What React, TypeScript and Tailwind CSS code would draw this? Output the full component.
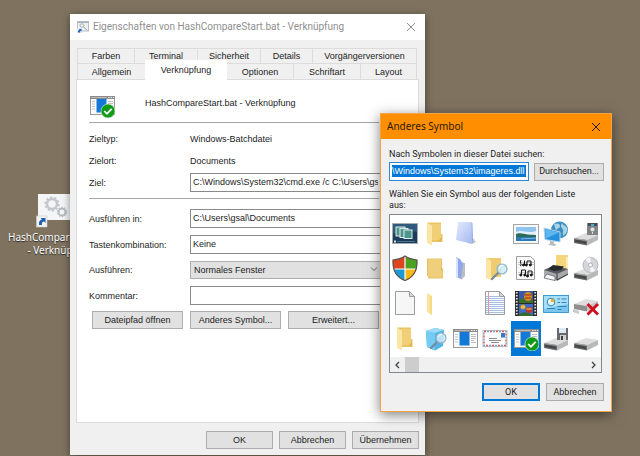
import React, { useState } from 'react';

type IconProps = { className?: string };

const Svg: React.FC<{ children?: React.ReactNode; className?: string }> = ({ children, className = 'w-[26px] h-[26px]' }) => (
  <svg viewBox="0 0 26 26" className={className} aria-hidden="true">
    {children}
  </svg>
);

const CloseIcon: React.FC<IconProps> = ({ className }) => (
  <svg viewBox="0 0 10 10" className={className} fill="none" stroke="currentColor" strokeWidth="1" aria-hidden="true">
    <path d="M1 1l8 8M9 1l-8 8" />
  </svg>
);

const Gear: React.FC<{ x: number; y: number; r: number; color: string }> = ({ x, y, r, color }) => (
  <g transform={`translate(${x} ${y})`} fill="none" stroke={color}>
    <circle r={r} strokeWidth={r * 0.5} />
    <circle r={r * 1.35} strokeWidth={r * 0.35} strokeDasharray={`${r * 0.45} ${r * 0.398}`} />
  </g>
);

const ShortcutFile: React.FC = () => (
  <svg viewBox="0 0 45 34" className="w-[45px] h-[34px]" aria-hidden="true">
    <rect x="2" y="0" width="43" height="26" fill="#f4f5f6" />
    <Gear x={16} y={10} r={5} color="#c3c7cb" />
    <Gear x={26} y={18} r={3.4} color="#b4b9be" />
    <rect x="0.500" y="22" width="10.500" height="11" fill="#f3f3f3" stroke="#c9c9c9" strokeWidth="0.600" />
    <path d="M3 31c-.3-3.500 1-5.200 3-5.400L4.600 24H9.500v5L8 27.500c-1.700.2-2.300 1.300-2 3.500z" fill="#1f5fb4" />
  </svg>
);

const BatchMini: React.FC = () => (
  <svg viewBox="0 0 12 12" className="w-3 h-3" aria-hidden="true">
    <rect x="0.500" y="0.500" width="11" height="9.500" fill="#eef1f2" stroke="#b7bfc4" />
    <path d="M1 1.500h10" stroke="#9cb2bd" />
    <Gear x={5} y={4.5} r={1.7} color="#aab2b8" />
    <path d="M6.500 6l4 3.500" stroke="#9aa4ab" />
    <rect x="0" y="7" width="5" height="5" fill="#dce7f2" />
    <path d="M1 11.500c0-2 .8-2.700 1.500-2.800L2 8h2.500v2.500l-.8-.7c-.6.3-.8.900-.7 1.700z" fill="#1f5fb4" />
  </svg>
);

const WindowShape = () => (
  <g>
    <rect x="1.500" y="4.500" width="24" height="18" fill="#fbfbfb" stroke="#9a9a9a" />
    <rect x="1" y="4" width="25" height="3" fill="#8b8b8b" />
    <path d="M2.500 5.500h15" stroke="#b9b9b9" />
    <path d="M19 5.500h1.500M21.500 5.500h1.500M24 5.500h1" stroke="#eeeeee" />
    <path d="M3 9.500h3M3 12h3M3 14.500h3M3 17h3" stroke="#c4c4c4" />
    <rect x="7.500" y="7" width="10" height="13.500" fill="#1478d6" />
    <path d="M19 9.500h5M19 11.500h5M19 13.500h5M19 15.500h3M19 17.500h5" stroke="#b4b4b4" strokeWidth="0.900" />
  </g>
);

const ProgramIcon = () => (
  <Svg><WindowShape /></Svg>
);

const ProgramOkIcon: React.FC<IconProps> = ({ className }) => (
  <Svg className={className}>
    <WindowShape />
    <circle cx="19" cy="19" r="7" fill="#109a18" stroke="#e9f5ea" strokeWidth="0.600" />
    <path d="M15.200 19l2.700 2.800 4.800-5" fill="none" stroke="#ffffff" strokeWidth="1.800" />
  </Svg>
);

const ScreensIcon = () => (
  <Svg>
    <rect x="0.500" y="3.500" width="25" height="20" fill="#1c3c5c" stroke="#a8adb0" />
    <path d="M1 4h24v8C17 9 9 17 1 13z" fill="#31597b" />
    <rect x="4" y="7" width="9" height="9" fill="#4e968d" stroke="#dfeeea" />
    <rect x="8" y="8.500" width="8" height="9" fill="#4e968d" stroke="#dfeeea" />
    <rect x="12" y="10" width="8" height="8.500" fill="#4e968d" stroke="#dfeeea" />
    <rect x="2" y="20.500" width="2" height="2" fill="#dce4e9" />
    <path d="M5 21.500h18" stroke="#557186" />
  </Svg>
);

const FolderOpenIcon = () => (
  <Svg>
    <path d="M5 2.500h14V14h1.500v8H9z" fill="#e9c462" />
    <path d="M9 4h10v16H9z" fill="#f0cf76" />
    <path d="M5 2.500l5 3V25.500L5 23z" fill="#fbe6a4" />
    <path d="M16 21h4v-4z" fill="#dfb650" />
  </Svg>
);

const FolderIcon = () => (
  <Svg>
    <path d="M5 3.500h15V14h1v9.500H6V21H5z" fill="#e7c267" />
    <path d="M6 4h13v10h1v8.500H6z" fill="#efcf7c" />
    <path d="M19 14h1.500" stroke="#c99d3c" />
  </Svg>
);

const FolderFrontIcon = () => (
  <Svg>
    <path d="M5 3l5 3v19L5 22z" fill="#fbe39b" />
    <path d="M9 6v18.500" stroke="#f2d27a" />
  </Svg>
);

const GlassIcon = () => (
  <Svg>
    <defs>
      <linearGradient id="glass" x1="0" y1="0" x2="1" y2="1">
        <stop offset="0" stopColor="#e3eaff" />
        <stop offset="1" stopColor="#a3b8f0" />
      </linearGradient>
    </defs>
    <path d="M20 17l4 5-4 2-5-1z" fill="#c6c6ca" />
    <path d="M6 2h14l1 20-2 1.500L4 20z" fill="url(#glass)" />
    <path d="M20 3l.5 20" stroke="#8ba4e3" strokeWidth="0.800" />
  </Svg>
);

const GlassFrontIcon = () => (
  <Svg>
    <path d="M9 7l4 1v13l-4 4z" fill="#bcbcc4" />
    <path d="M4 2l4 2 3 5-2 15-5-2z" fill="#8ea6ea" />
    <path d="M4 2l2 2v19l-2-1z" fill="#d9e2ff" />
  </Svg>
);

const Magnifier: React.FC<{ x: number; y: number }> = ({ x, y }) => (
  <g transform={`translate(${x} ${y})`}>
    <path d="M-4 4l-6 6" stroke="#7a8b99" strokeWidth="2.400" strokeLinecap="round" />
    <circle r="5" fill="#cdeaf6" fillOpacity="0.850" stroke="#8eb2c6" strokeWidth="1.200" />
    <path d="M-3-1a3.500 3.500 0 014-2.500" stroke="#ffffff" fill="none" />
  </g>
);

const FolderSearchIcon = () => (
  <Svg>
    <path d="M4 3h15v19H4z" fill="#efcc70" />
    <path d="M4 3l5 2.500V25.500L4 23z" fill="#fbe6a4" />
    <Magnifier x={20} y={14} />
  </Svg>
);

const SearchBoxIcon = () => (
  <Svg>
    <path d="M4 6l9-3 9 2-1 16-8 4.500L5 22z" fill="#4fb4ea" />
    <path d="M4 6l9 2v17.500L5 22z" fill="#74cbf4" />
    <path d="M4 6l9-3 9 2-9 3z" fill="#9bddf9" />
    <Magnifier x={19} y={13} />
  </Svg>
);

const ShieldIcon = () => (
  <Svg>
    <defs>
      <clipPath id="shield">
        <path d="M13 1c3.500 2.500 7 3.500 12 4 .5 9-3 17-12 20.500C4 22 .5 14 1 5c5-.5 8.500-1.500 12-4z" />
      </clipPath>
    </defs>
    <g clipPath="url(#shield)">
      <path d="M0 0h13v14H0z" fill="#dd4420" />
      <path d="M13 0h13v14H13z" fill="#4ba120" />
      <path d="M0 14h13v12H0z" fill="#1b9ad8" />
      <path d="M13 14h13v12H13z" fill="#fbb714" />
      <path d="M13 0v26M0 14h26" stroke="#ffffff" strokeWidth="1.200" />
    </g>
    <path d="M13 1c3.500 2.500 7 3.500 12 4 .5 9-3 17-12 20.500C4 22 .5 14 1 5c5-.5 8.500-1.500 12-4z" fill="none" stroke="#5a5048" strokeWidth="1.200" />
  </Svg>
);

const PageIcon = () => (
  <Svg>
    <path d="M3.500 1.500h14l5 5v18h-19z" fill="#f6f6f6" stroke="#9d9d9d" />
    <path d="M17.500 1.500v5h5z" fill="#dcdcdc" stroke="#9d9d9d" />
  </Svg>
);

const TextPageIcon = () => (
  <Svg>
    <path d="M3.500 1.500h14l5 5v18h-19z" fill="#fafcff" stroke="#9d9d9d" />
    <path d="M4 6.500h13M4 8.500h18M4 10.500h18M4 12.500h18M4 14.500h18M4 16.500h18M4 18.500h18M4 20.500h18M4 22.500h18" stroke="#a8bfe0" />
    <path d="M6.500 2v22" stroke="#d99aa5" />
    <path d="M17.500 1.500v5h5z" fill="#dcdcdc" stroke="#9d9d9d" />
  </Svg>
);

const MusicIcon = () => (
  <Svg>
    <path d="M3.500 1.500h14l4 3.500v19.500h-18z" fill="#f9f9f9" stroke="#9d9d9d" />
    <path d="M5 7.500h16M5 9.500h16M5 17.500h16M5 19.500h16" stroke="#b5b5b5" strokeWidth="0.700" />
    <g fill="#151515" stroke="#151515">
      <path d="M8 5c-2 3 2 5-1 6M11.500 10V5.500M14 10V6h4v4" fill="none" />
      <circle cx="10.500" cy="10" r="1" />
      <circle cx="13.300" cy="10" r="1" />
      <circle cx="17.300" cy="10" r="1" />
      <path d="M8.500 20v-5h4v4.500M15 21v-5h4v4" fill="none" />
      <circle cx="7.800" cy="20" r="1" />
      <circle cx="11.800" cy="20" r="1" />
      <circle cx="14.500" cy="21" r="1" />
      <circle cx="18.300" cy="20" r="1" />
    </g>
  </Svg>
);

const PictureIcon = () => (
  <Svg>
    <rect x="0.500" y="4.500" width="25" height="19" fill="#f8f8f8" stroke="#a5a5a5" />
    <rect x="3" y="7" width="20" height="14" fill="#8fc4ef" />
    <path d="M3 12c5-3 12 2 20-1v5H3z" fill="#e4f1fa" />
    <path d="M3 14c4-2 8 1 20 1v3H3z" fill="#2e6a5c" />
    <path d="M3 17h20v4H3z" fill="#2d79b6" />
    <path d="M8 19c5-1 9 0 15-1" stroke="#78b7dd" fill="none" />
  </Svg>
);

const FilmIcon = () => (
  <Svg>
    <rect x="2" y="1" width="22" height="25" fill="#2c2c30" />
    <path d="M3.800 2v24M22.200 2v24" stroke="#e3e3e3" strokeWidth="1.800" strokeDasharray="1.600 1.400" />
    <rect x="6" y="1" width="14" height="12" fill="#3a5aa8" />
    <rect x="6" y="14" width="14" height="12" fill="#3c6bc9" />
    <path d="M6 10l4-2 5 3 5-2v4H6z" fill="#39702c" />
    <ellipse cx="15" cy="6.500" rx="4" ry="4.500" fill="#d98a20" />
    <path d="M11.500 5h7M12 8h6" stroke="#a02828" />
    <circle cx="10" cy="17" r="2.500" fill="#e0a023" />
    <circle cx="16" cy="20" r="3" fill="#c63328" />
    <path d="M8 17h4M13.500 19h5" stroke="#f1df4f" />
    <path d="M6 24l6-2 8 3v1H6z" fill="#35692e" />
  </Svg>
);

const NetworkIcon = () => (
  <Svg>
    <circle cx="16.500" cy="10" r="8.500" fill="#3a8fc2" />
    <path d="M11 4c3-1 6-1 6 2s-4 2-4 5M19 3c1 3 5 2 5.500 7-1 4-3 4-4 6-2-3 1-5-1-7s-2-4-.5-6z" fill="#a7d3e4" />
    <path d="M1 8l16 4v10L2 19.500z" fill="#2790dd" stroke="#b8d5e8" />
    <path d="M2 9l14 3.500-13 6z" fill="#5db6f0" />
    <path d="M7 21v2.500l-2 1 6 1.500 3-1-3-1.500v-2" fill="#b5bcc2" />
  </Svg>
);

const PrinterIcon = () => (
  <Svg>
    <path d="M13 0h12v16H13z" fill="#f5d67c" />
    <path d="M24 2v12" stroke="#fdeeb8" strokeWidth="2" />
    <path d="M1 15l9-4 15 3v6l-11 6-13-4z" fill="#a7a9ac" />
    <path d="M1 15l9-4 15 3-11 5z" fill="#55585c" />
    <path d="M5 14l5-4 11 1.500-3 3.500-7 1z" fill="#26292d" />
    <path d="M4 19l8 2.500v4L1 23z" fill="#f8f8f8" stroke="#606468" strokeWidth="0.800" />
    <path d="M14 19v6l11-6" fill="none" stroke="#333333" />
  </Svg>
);

const IdCardIcon = () => (
  <Svg>
    <rect x="0.500" y="5.500" width="25" height="17" fill="#7cc6ee" stroke="#3b9bd3" />
    <path d="M1 6h24v8L1 19z" fill="#a8def6" />
    <circle cx="8" cy="12" r="3.800" fill="#e8f8ff" stroke="#2985bf" />
    <path d="M8 12V8.500A3.500 3.500 0 0111.500 12z" fill="#eeb02a" />
    <path d="M14.500 9h2.500M18.500 9h5M14.500 12.500h2.500M18.500 12.500h5M4 18.500h8M14.500 16.500h9M14.500 19.500h4" stroke="#2985bf" />
  </Svg>
);

const EnvelopeIcon = () => (
  <Svg>
    <rect x="1" y="5.500" width="24" height="16" fill="#fcfcfc" stroke="#bdbdbd" />
    <rect x="2" y="6.500" width="22" height="14" fill="none" stroke="#d65a5a" strokeWidth="1.400" strokeDasharray="2 4" />
    <rect x="2" y="6.500" width="22" height="14" fill="none" stroke="#7f9dd0" strokeWidth="1.400" strokeDasharray="2 4" strokeDashoffset="3" />
    <path d="M7 13.500h8M7 15.500h12M9 17.500h8" stroke="#8f8f8f" />
    <rect x="19" y="8" width="4" height="4.500" fill="#3779cc" />
  </Svg>
);

const DriveShape = () => (
  <g>
    <path d="M1 18l12-5 12 2-11 5z" fill="#dedede" />
    <path d="M14 20l11-5v5L14 25.500z" fill="#b9b9b9" />
    <path d="M1 18l13 2v5.500L1 23z" fill="#6a6c6e" />
    <path d="M2 19.500l11 2v2.500l-11-2z" fill="#45474a" />
    <path d="M1 18l13 2v1L1 19z" fill="#a8a8a8" />
  </g>
);

const DriveIcon = () => (
  <Svg><DriveShape /></Svg>
);

const FloppyDriveIcon = () => (
  <Svg>
    <DriveShape />
    <rect x="14" y="3" width="11" height="12" fill="#67696d" />
    <rect x="16" y="3" width="7" height="5" fill="#dcecf5" />
    <rect x="17" y="10" width="6" height="5" fill="#d0d2d4" />
    <rect x="18" y="11" width="2" height="4" fill="#3d4043" />
  </Svg>
);

const OldFloppyDriveIcon = () => (
  <Svg>
    <DriveShape />
    <rect x="14" y="3" width="11" height="12" fill="#818387" />
    <rect x="15" y="3" width="9" height="3" fill="#4a4c4f" />
    <path d="M18 5h3" stroke="#3eb0d8" strokeWidth="2" />
    <circle cx="19.500" cy="9.500" r="2" fill="#e4e4e4" />
    <path d="M19.500 12v2" stroke="#dddddd" />
  </Svg>
);

const DiscDriveIcon = () => (
  <Svg>
    <DriveShape />
    <circle cx="17.500" cy="10" r="7.500" fill="#d4d7da" stroke="#a8abae" strokeWidth="0.800" />
    <path d="M17.500 10l-5-5.500a7.500 7.500 0 015-2zM17.500 10l5 5.500a7.500 7.500 0 01-5 2z" fill="#f5f6f7" />
    <circle cx="17.500" cy="10" r="2" fill="#ffffff" stroke="#a0a3a6" strokeWidth="0.800" />
  </Svg>
);

const OfflineDriveIcon = () => (
  <Svg>
    <path d="M1 14l12-5 12 2-11 5z" fill="#dedede" />
    <path d="M1 14l13 2v5.500L1 19z" fill="#8f8f8f" />
    <path d="M14 16l11-5v5l-11 5.500z" fill="#c5c5c5" />
    <path d="M0 19l6 2v3l-6-2z" fill="#c9c9c9" />
    <path d="M14.500 14l10.500 10.500M25 14L14.500 24.500" stroke="#cf1020" strokeWidth="3" />
  </Svg>
);

const Empty = () => <Svg />;

const SYMBOLS: { name: string; Icon: React.FC<IconProps> }[] = [
  { name: 'screens', Icon: ScreensIcon },
  { name: 'folder-open', Icon: FolderOpenIcon },
  { name: 'glass', Icon: GlassIcon },
  { name: 'empty-1', Icon: Empty },
  { name: 'picture', Icon: PictureIcon },
  { name: 'network', Icon: NetworkIcon },
  { name: 'floppy-525', Icon: OldFloppyDriveIcon },
  { name: 'shield', Icon: ShieldIcon },
  { name: 'folder', Icon: FolderIcon },
  { name: 'glass-front', Icon: GlassFrontIcon },
  { name: 'folder-search', Icon: FolderSearchIcon },
  { name: 'music', Icon: MusicIcon },
  { name: 'printer', Icon: PrinterIcon },
  { name: 'disc', Icon: DiscDriveIcon },
  { name: 'page', Icon: PageIcon },
  { name: 'folder-front', Icon: FolderFrontIcon },
  { name: 'empty-2', Icon: Empty },
  { name: 'text-page', Icon: TextPageIcon },
  { name: 'film', Icon: FilmIcon },
  { name: 'id-card', Icon: IdCardIcon },
  { name: 'offline', Icon: OfflineDriveIcon },
  { name: 'folder-open-2', Icon: FolderOpenIcon },
  { name: 'search', Icon: SearchBoxIcon },
  { name: 'program', Icon: ProgramIcon },
  { name: 'envelope', Icon: EnvelopeIcon },
  { name: 'program-ok', Icon: ProgramOkIcon },
  { name: 'floppy-35', Icon: FloppyDriveIcon },
  { name: 'drive', Icon: DriveIcon },
];

const Button: React.FC<{ children: React.ReactNode; className?: string }> = ({ children, className = '' }) => (
  <button type="button" className={`h-[18px] border bg-[#e1e1e1] text-center whitespace-nowrap ${className}`}>
    {children}
  </button>
);

const Field: React.FC<{ id: string; label: string; value: string }> = ({ id, label, value }) => (
  <div className="flex items-center">
    <label htmlFor={id} className="w-[101px] shrink-0">{label}</label>
    <input id={id} type="text" defaultValue={value} className="h-[19px] min-w-0 flex-1 border border-[#8a8a8a] bg-white px-0.5 pb-0.5 outline-none" />
  </div>
);

const TAB = 'border-t border-r border-[#dcdcdc] text-center whitespace-nowrap';

const PropertiesWindow: React.FC = () => (
  <section className="absolute top-[14px] left-[70px] right-[215px] bg-[#f0f0f0] font-['Liberation_Sans',sans-serif] text-[9px] leading-3 text-[#1c1c1c] shadow-[0_2px_8px_rgba(0,0,0,0.45)]">
    <header className="flex h-[26px] items-center gap-1 bg-white pr-[9px] pl-[7px] font-['Roboto',sans-serif] text-[10px] text-[#8f8f8f]">
      <BatchMini />
      <h1 className="flex-1 whitespace-nowrap">Eigenschaften von HashCompareStart.bat - Verknüpfung</h1>
      <button type="button" aria-label="Schließen">
        <CloseIcon className="h-[10px] w-[10px]" />
      </button>
    </header>

    <div className="px-1.5 pt-2">
      <nav className="mr-0.5 ml-px border-l border-[#dcdcdc]">
        <div className="flex h-[15px]">
          <button type="button" className={`${TAB} w-[57px]`}>Farben</button>
          <button type="button" className={`${TAB} w-[63px]`}>Terminal</button>
          <button type="button" className={`${TAB} w-[63px]`}>Sicherheit</button>
          <button type="button" className={`${TAB} w-[52px]`}>Details</button>
          <button type="button" className={`${TAB} flex-1`}>Vorgängerversionen</button>
        </div>
        <div className="flex h-4">
          <button type="button" className={`${TAB} w-[67px] border-r-0`}>Allgemein</button>
          <button type="button" className="relative -mt-[3px] h-5 w-[82px] bg-white">Verknüpfung</button>
          <button type="button" className={`${TAB} w-[67px]`}>Optionen</button>
          <button type="button" className={`${TAB} w-[67px]`}>Schriftart</button>
          <button type="button" className={`${TAB} flex-1`}>Layout</button>
        </div>
      </nav>

      <form className="flex flex-col border border-[#dcdcdc] bg-white pt-3 pr-[37px] pb-[93px] pl-3">
        <div className="flex items-center gap-[30px] pb-1">
          <ProgramOkIcon className="h-[26px] w-[26px]" />
          <span className="pb-1">HashCompareStart.bat - Verknüpfung</span>
        </div>
        <div className="mr-0.5 border-t border-[#a5a5a5] pt-2.5">
          <div className="flex"><span className="w-[101px]">Zieltyp:</span><span>Windows-Batchdatei</span></div>
          <div className="mt-2.5 flex"><span className="w-[101px]">Zielort:</span><span>Documents</span></div>
        </div>
        <div className="mt-1.5">
          <Field id="ziel" label="Ziel:" value="C:\Windows\System32\cmd.exe /c C:\Users\gsal\Documents" />
        </div>
        <div className="mt-1.5 mr-0.5 mb-2.5 border-t border-[#a5a5a5]" />
        <div className="flex flex-col gap-[7px]">
          <Field id="ordner" label="Ausführen in:" value="C:\Users\gsal\Documents" />
          <Field id="taste" label="Tastenkombination:" value="Keine" />
          <div className="flex items-center">
            <label htmlFor="modus" className="w-[101px] shrink-0">Ausführen:</label>
            <div className="relative min-w-0 flex-1">
              <select id="modus" className="block h-[18px] w-full appearance-none border border-[#adadad] bg-[#e1e1e1] px-[3px] outline-none">
                <option>Normales Fenster</option>
                <option>Minimiert</option>
                <option>Maximiert</option>
              </select>
              <svg viewBox="0 0 8 5" className="pointer-events-none absolute top-1.5 right-[3px] h-[5px] w-2" fill="none" stroke="#666666" aria-hidden="true">
                <path d="M1 0.500l3 3 3-3" />
              </svg>
            </div>
          </div>
          <Field id="kommentar" label="Kommentar:" value="" />
        </div>
        <div className="mt-1.5 mr-0.5 ml-[3px] flex gap-[7px]">
          <Button className="flex-1 border-[#adadad]">Dateipfad öffnen</Button>
          <Button className="flex-1 border-[#adadad]">Anderes Symbol...</Button>
          <Button className="flex-1 border-[#adadad]">Erweitert...</Button>
        </div>
      </form>
    </div>

    <footer className="flex justify-end gap-1.5 px-1.5 pt-2 pb-1.5">
      <Button className="w-[67px] border-[#adadad]">OK</Button>
      <Button className="w-[67px] border-[#adadad]">Abbrechen</Button>
      <Button className="w-[67px] border-[#adadad]">Übernehmen</Button>
    </footer>
  </section>
);

const IconWindow: React.FC = () => {
  const [selected, setSelected] = useState('program-ok');

  return (
    <section className="absolute top-[113px] right-[28px] left-[380px] border border-[#f0a648] bg-[#f0f0f0] font-['Roboto',sans-serif] text-[9px] leading-[11px] text-[#1c1c1c] shadow-[0_3px_12px_rgba(0,0,0,0.5)]">
      <header className="flex h-[25px] items-center bg-[#ff8f00] pr-2.5 pl-1.5 font-['Noto_Sans',sans-serif] text-[10px] text-[#2b1a05]">
        <h2 className="flex-1">Anderes Symbol</h2>
        <button type="button" aria-label="Schließen">
          <CloseIcon className="h-[10px] w-[10px]" />
        </button>
      </header>

      <div className="pt-2.5 pr-[7px] pb-2.5 pl-2">
        <label htmlFor="datei" className="block whitespace-nowrap">Nach Symbolen in dieser Datei suchen:</label>
        <div className="mt-0.5 flex items-center gap-[5px]">
          <div className="flex h-[19px] min-w-0 flex-1 items-start border border-[#2b8ad8] bg-white px-0.5 pt-0.5">
            <input id="datei" type="text" defaultValue="\Windows\System32\imageres.dll" className="h-3 w-full min-w-0 bg-[#0078d7] font-['Liberation_Sans',sans-serif] text-white outline-none" />
          </div>
          <Button className="w-[70px] border-[#adadad]">Durchsuchen...</Button>
        </div>
        <p className="mt-2 pr-5">Wählen Sie ein Symbol aus der folgenden Liste aus:</p>

        <div className="mt-[3px] mr-0.5 border border-[#828790] bg-white">
          <div className="grid grid-cols-7 pt-px pb-px">
            {SYMBOLS.map(({ name, Icon }) => (
              <button
                key={name}
                type="button"
                aria-label={name}
                onClick={() => setSelected(name)}
                className={`flex h-[35px] items-center justify-center pb-0.5 ${selected === name ? 'bg-[#0078d7]' : ''}`}
              >
                <Icon />
              </button>
            ))}
          </div>
          <div className="flex h-[15px] items-center bg-[#f0f0f0] px-[5px] text-[#404040]">
            <svg viewBox="0 0 5 8" className="h-2 w-[5px]" fill="none" stroke="currentColor" strokeWidth="1.300" aria-hidden="true"><path d="M4 1L1 4l3 3" /></svg>
            <div className="mx-[5px] h-full flex-1"><div className="h-full w-3.5 bg-[#cdcdcd]" /></div>
            <svg viewBox="0 0 5 8" className="h-2 w-[5px]" fill="none" stroke="currentColor" strokeWidth="1.300" aria-hidden="true"><path d="M1 1l3 3-3 3" /></svg>
          </div>
        </div>

        <div className="mt-2.5 flex justify-end gap-1.5">
          <Button className="w-[58px] border-[#0078d7] outline outline-[#0078d7] -outline-offset-2">OK</Button>
          <Button className="w-[58px] border-[#adadad]">Abbrechen</Button>
        </div>
      </div>
    </section>
  );
};

const App: React.FC = () => {
  return (
    <main className="relative min-h-screen overflow-hidden bg-[#7f7360]">
      <a href="#start" className="absolute top-[194px] left-[8px] w-[106px] font-['Noto_Sans',sans-serif] text-[10px] leading-[13px] text-white [text-shadow:0_1px_1px_rgba(0,0,0,0.7)]">
        <div className="pl-7"><ShortcutFile /></div>
        <span className="block pt-[3px] text-center whitespace-nowrap">
          HashCompareStart.bat<br />- Verknüpfung
        </span>
      </a>
      <PropertiesWindow />
      <IconWindow />
    </main>
  );
};

export default App;
